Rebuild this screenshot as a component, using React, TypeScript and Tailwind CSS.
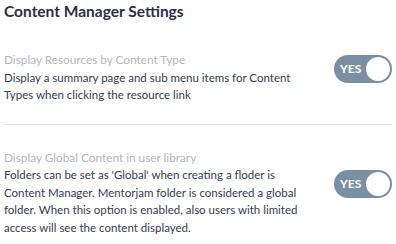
import React from "react";

function Toggle() {
  return (
    <div className="relative flex h-[28px] w-[58px] shrink-0 items-center rounded-full bg-[#7b8fa3] pl-[6px]">
      <span className="text-[12px] font-bold leading-none text-white">YES</span>
      <span className="absolute right-[2px] top-[2px] h-[24px] w-[24px] rounded-full bg-white" />
    </div>
  );
}

function Section({ label, lines }: { label: string; lines: string[] }) {
  return (
    <div className="flex items-center justify-between">
      <div className="text-[11.5px] leading-[17.5px]">
        <div className="text-[11.8px] text-[#b3b6c6]">{label}</div>
        {lines.map((l, i) => (
          <div key={i} className="text-[#363b55]">
            {l}
          </div>
        ))}
      </div>
      <div className="mb-[17px]">
        <Toggle />
      </div>
    </div>
  );
}

export default function App() {
  return (
    <div
      className="w-[396px] h-[244px] bg-white pl-[4px] pr-[4px]"
      style={{ fontFamily: "Lato, 'Noto Sans', sans-serif" }}
    >
      <h1 className="text-[15.5px] font-bold leading-[22px] text-[#2b3048]">
        Content Manager Settings
      </h1>
      <div className="mt-[29px]">
        <Section
          label="Display Resources by Content Type"
          lines={[
            "Display a summary page and sub menu items for Content",
            "Types when clicking the resource link",
          ]}
        />
      </div>
      <div className="mt-[20px] h-px bg-[#e4e5e8]" />
      <div className="mt-[24px]">
        <Section
          label="Display Global Content in user library"
          lines={[
            "Folders can be set as 'Global' when creating a floder is",
            "Content Manager. Mentorjam folder is considered a global",
            "folder. When this option is enabled, also users with limited",
            "access will see the content displayed.",
          ]}
        />
      </div>
    </div>
  );
}
